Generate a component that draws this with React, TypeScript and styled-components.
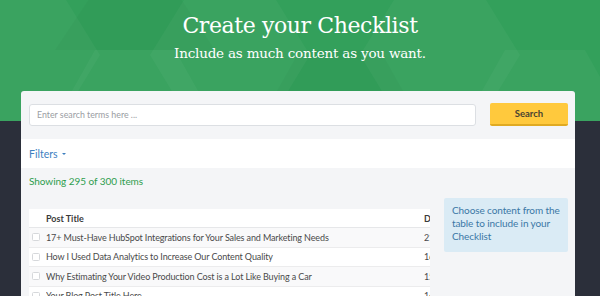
import styled, { createGlobalStyle } from 'styled-components'

const GlobalStyle = createGlobalStyle`
  html, body {
    margin: 0;
    padding: 0;
    background: #2b2f3a;
    overflow: hidden;
    font-family: Lato, "Open Sans", sans-serif;
  }
`

const hexBg = `url("data:image/svg+xml;utf8,${encodeURIComponent(
  `<svg xmlns='http://www.w3.org/2000/svg' width='600' height='121'>
    <g fill='#ffffff' fill-opacity='0.035'>
      <polygon points='-20,-10 60,-10 100,55 60,121 -20,121 -60,55'/>
      <polygon points='190,-10 270,-10 310,55 270,121 190,121 150,55'/>
      <polygon points='400,-10 480,-10 520,55 480,121 400,121 360,55'/>
      <polygon points='95,50 175,50 215,121 55,121'/>
      <polygon points='505,50 585,50 625,121 465,121'/>
    </g>
    <g fill='#000000' fill-opacity='0.025'>
      <polygon points='300,50 380,50 420,121 260,121'/>
      <polygon points='95,-10 175,-10 215,50 55,50'/>
    </g>
  </svg>`
)}")`

const Hero = styled.header`
  height: 121px;
  box-sizing: border-box;
  padding-top: 12px;
  background-color: #33a05b;
  background-image: ${hexBg};
  color: #fff;
  text-align: center;
  font-family: "DejaVu Serif", "Liberation Serif", serif;
`

const Title = styled.h1`
  margin: 0;
  font-size: 22px;
  font-weight: normal;
  line-height: 28px;
  letter-spacing: -0.4px;
`

const Subtitle = styled.p`
  margin: 4px 0 0;
  font-size: 13.5px;
  line-height: 18px;
  letter-spacing: -0.2px;
`

const Card = styled.main`
  margin: -30px 0 0 21px;
  width: 554px;
  background: #f4f5f7;
  border-radius: 3px 3px 0 0;
  overflow: hidden;
`

const SearchBar = styled.div`
  display: flex;
  align-items: center;
  gap: 14px;
  padding: 12px 7px 13px 8px;
`

const SearchInput = styled.input`
  flex: 1;
  height: 22px;
  box-sizing: border-box;
  border: 1px solid #dcdfe3;
  border-radius: 3px;
  background: #fff;
  padding: 0 7px;
  font-family: Lato, sans-serif;
  font-size: 8.8px;
  color: #555;
  outline: none;
  &::placeholder {
    color: #9a9da3;
  }
`

const SearchButton = styled.button`
  width: 78px;
  height: 23px;
  border: none;
  border-bottom: 2px solid #e0aa22;
  border-radius: 2px;
  background: #ffc93d;
  color: #4a4331;
  font-family: Lato, sans-serif;
  font-size: 9.5px;
  font-weight: bold;
  padding: 0;
`

const FiltersRow = styled.div`
  height: 29px;
  display: flex;
  align-items: center;
  padding-left: 8px;
  background: #fff;
`

const FiltersToggle = styled.span`
  color: #3d7fbf;
  font-size: 10.5px;
  display: flex;
  align-items: center;
  gap: 4px;
  &::after {
    content: '';
    border-left: 2.5px solid transparent;
    border-right: 2.5px solid transparent;
    border-top: 2.5px solid #3d7fbf;
    margin-top: 1px;
  }
`

const Content = styled.section`
  padding: 6px 7px 0 8px;
`

const Count = styled.div`
  color: #2e9d4e;
  font-size: 10px;
  line-height: 15px;
  letter-spacing: -0.05px;
`

const Columns = styled.div`
  display: flex;
  align-items: flex-start;
  gap: 14px;
  margin-top: 9px;
`

const TableWrap = styled.div`
  width: 401px;
  margin-top: 11px;
  overflow: hidden;
  flex-shrink: 0;
`

const Table = styled.div`
  width: 440px;
`

const Row = styled.div<{ $head?: boolean; $shade?: boolean }>`
  display: grid;
  grid-template-columns: 17px 378px 1fr;
  align-items: center;
  height: ${p => (p.$head ? '18px' : '18.5px')};
  background: ${p => (p.$shade ? '#f9f9fa' : '#fff')};
  border-bottom: 1px solid ${p => (p.$head ? '#e6e7e9' : '#ececed')};
  font-size: 9px;
  letter-spacing: ${p => (p.$head ? '0' : '-0.12px')};
  font-weight: ${p => (p.$head ? 'bold' : 'normal')};
  color: ${p => (p.$head ? '#3b3b3b' : '#4a4a4a')};
  white-space: nowrap;
`

const Check = styled.span`
  width: 6px;
  height: 6px;
  margin-left: 3px;
  border: 1px solid #d6d8db;
  border-radius: 1.5px;
  background: #fff;
`

const Cell = styled.span`
  overflow: hidden;
`

const Info = styled.aside`
  width: 124px;
  box-sizing: border-box;
  padding: 6px 6px 9px 8px;
  background: #daebf5;
  border-radius: 2px;
  color: #3a78a6;
  font-size: 10px;
  line-height: 13px;
  letter-spacing: -0.1px;
`

const rows = [
  { title: '17+ Must-Have HubSpot Integrations for Your Sales and Marketing Needs', date: '21' },
  { title: 'How I Used Data Analytics to Increase Our Content Quality', date: '16' },
  { title: 'Why Estimating Your Video Production Cost is a Lot Like Buying a Car', date: '15' },
  { title: 'Your Blog Post Title Here', date: '14' },
]

export default function App() {
  return (
    <>
      <GlobalStyle />
      <Hero>
        <Title>Create your Checklist</Title>
        <Subtitle>Include as much content as you want.</Subtitle>
      </Hero>
      <Card>
        <SearchBar>
          <SearchInput placeholder="Enter search terms here ..." />
          <SearchButton>Search</SearchButton>
        </SearchBar>
        <FiltersRow>
          <FiltersToggle>Filters</FiltersToggle>
        </FiltersRow>
        <Content>
          <Count>Showing 295 of 300 items</Count>
          <Columns>
            <TableWrap>
              <Table>
                <Row $head>
                  <span />
                  <Cell>Post Title</Cell>
                  <Cell>Date</Cell>
                </Row>
                {rows.map((r, i) => (
                  <Row key={r.title} $shade={i % 2 === 0}>
                    <Check />
                    <Cell>{r.title}</Cell>
                    <Cell>{r.date}</Cell>
                  </Row>
                ))}
              </Table>
            </TableWrap>
            <Info>Choose content from the table to include in your Checklist</Info>
          </Columns>
        </Content>
      </Card>
    </>
  )
}
